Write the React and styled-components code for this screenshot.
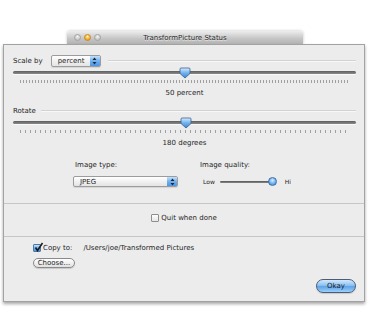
import React from 'react';
import styled, { createGlobalStyle } from 'styled-components';

const GlobalStyle = createGlobalStyle`
  body {
    margin: 0;
    background: #fff;
    font-family: "DejaVu Sans", "Liberation Sans", sans-serif;
    font-size: 7px;
    color: #1e1e1e;
  }
`;

const Stage = styled.div`
  width: 370px;
  height: 333px;
  padding-top: 31px;
  box-sizing: border-box;
`;

const TitleBar = styled.div`
  margin-left: 67px;
  width: 236px;
  height: 13px;
  box-sizing: border-box;
  display: grid;
  grid-template-columns: 1fr auto 1fr;
  align-items: center;
  background: linear-gradient(#ededed, #c4c4c4 60%, #b4b4b4);
  border-radius: 3px 3px 0 0;
  box-shadow: 0 0 3px rgba(0,0,0,.25);
`;

const Lights = styled.div`
  display: flex;
  gap: 3px;
  padding-left: 7px;
`;

const Light = styled.span`
  width: 7px;
  height: 7px;
  border-radius: 50%;
  box-sizing: border-box;
  border: 1px solid ${p => (p.active ? '#c98a1c' : '#a4a4a4')};
  background: ${p => (p.active
    ? 'radial-gradient(circle at 50% 30%, #fff2b0, #f5b635 55%, #e0901a)'
    : 'radial-gradient(circle at 50% 30%, #f4f4f4, #cdcdcd 60%, #b8b8b8)')};
`;

const Title = styled.div`
  font-size: 7px;
  color: #2a2a2a;
  text-shadow: 0 1px 0 rgba(255,255,255,.6);
`;

const Panel = styled.div`
  margin-left: 3px;
  width: 362px;
  height: 258px;
  box-sizing: border-box;
  border: 1px solid #a2a2a2;
  background: #ececec;
  box-shadow: 0 2px 3px rgba(0,0,0,.35);
  display: flex;
  flex-direction: column;
`;

const Section = styled.div`
  height: ${p => p.h}px;
  box-sizing: border-box;
  padding: ${p => p.pad};
  border-bottom: ${p => (p.last ? 'none' : '1px solid #c6c6c6')};
  display: flex;
  flex-direction: column;
`;

const GroupHeader = styled.div`
  height: 13px;
  margin-top: ${p => p.mt}px;
  display: flex;
  align-items: center;
`;

const GroupLine = styled.div`
  flex: 1;
  height: 1px;
  margin-left: ${p => p.ml}px;
  background: #d2d2d2;
  border-bottom: 1px solid #f8f8f8;
`;

const Popup = styled.div`
  width: ${p => p.w}px;
  height: ${p => p.h}px;
  margin-left: ${p => p.ml || 0}px;
  box-sizing: border-box;
  border: 1px solid #9c9c9c;
  border-radius: 2px;
  background: linear-gradient(#ffffff, #f1f1f1 50%, #e4e4e4);
  display: flex;
  align-items: center;
  padding-left: 6px;
  box-shadow: 0 1px 1px rgba(0,0,0,.1);
`;

const PopupText = styled.span`
  flex: 1;
`;

const PopupArrows = styled.div`
  width: 10px;
  align-self: stretch;
  display: flex;
  align-items: center;
  justify-content: center;
  background: linear-gradient(#c6e0fa, #6fb0ef 50%, #4f97e2);
  border-radius: 0 1px 1px 0;
`;

const SliderRow = styled.div`
  position: relative;
  height: 11px;
  display: flex;
  align-items: center;
`;

const Track = styled.div`
  flex: 1;
  height: 3px;
  border-radius: 2px;
  background: linear-gradient(#5e5e5e, #8a8a8a);
  box-shadow: 0 1px 0 rgba(255,255,255,.7);
`;

const Knob = styled.svg`
  position: absolute;
  top: 0;
  transform: translateX(-50%);
`;

const Ticks = styled.div`
  height: 3px;
  margin: 2px ${p => p.inset}px 0;
  background: repeating-linear-gradient(to right, #8d8d8d 0 1px, transparent 1px ${p => p.step}px);
  opacity: .8;
`;

const ValueLabel = styled.div`
  margin-top: 5px;
  height: 10px;
  line-height: 10px;
  text-align: center;
`;

const ImageRow = styled.div`
  margin-top: 12px;
  margin-left: 60px;
  display: flex;
  gap: 22px;
`;

const Column = styled.div`
  display: flex;
  flex-direction: column;
  gap: 6px;
`;

const Label = styled.div`
  height: 10px;
  line-height: 10px;
  padding-left: ${p => p.pl || 0}px;
`;

const QualityRow = styled.div`
  height: 11px;
  display: flex;
  align-items: center;
  padding-left: 3px;
  font-size: 6px;
`;

const MiniSlider = styled.div`
  position: relative;
  width: 60px;
  margin: 0 5px;
  height: 11px;
  display: flex;
  align-items: center;
`;

const MiniTrack = styled.div`
  width: 52px;
  height: 2px;
  border-radius: 1px;
  background: linear-gradient(#555, #8a8a8a);
`;

const RoundKnob = styled.div`
  position: absolute;
  left: 48px;
  top: 1px;
  width: 9px;
  height: 9px;
  border-radius: 50%;
  box-sizing: border-box;
  border: 1px solid #3d6fa8;
  background: radial-gradient(circle at 50% 35%, #d8ecff, #6fb0ef 55%, #3f86d4);
`;

const CheckRow = styled.div`
  height: 10px;
  display: flex;
  align-items: center;
  justify-content: ${p => (p.center ? 'center' : 'flex-start')};
  gap: 2px;
`;

const Box = styled.div`
  width: 8px;
  height: 8px;
  box-sizing: border-box;
  border: 1px solid ${p => (p.checked ? '#4a78a8' : '#8e8e8e')};
  border-radius: 1px;
  background: ${p => (p.checked
    ? 'linear-gradient(#c7e1fb, #6aaeee 55%, #4d95e0)'
    : 'linear-gradient(#fdfdfd, #e6e6e6)')};
  position: relative;
`;

const CheckMark = styled.svg`
  position: absolute;
  left: 0;
  top: -3px;
`;

const Path = styled.span`
  margin-left: 9px;
`;

const PillButton = styled.button`
  height: ${p => p.h}px;
  width: ${p => p.w}px;
  padding: 0;
  margin-top: ${p => p.mt}px;
  align-self: ${p => p.align};
  font-family: inherit;
  font-size: 7px;
  color: #1e1e1e;
  border-radius: 8px;
  border: 1px solid ${p => (p.primary ? '#4b5d75' : '#8a8a8a')};
  background: ${p => (p.primary
    ? 'linear-gradient(#d3e8fc, #8cc2f3 45%, #5fa3ea 55%, #9bd0fb)'
    : 'linear-gradient(#ffffff, #f0f0f0 50%, #e0e0e0)')};
  box-shadow: 0 1px 1px rgba(0,0,0,.15);
`;

const Arrows = () => (
  <svg width="5" height="8" viewBox="0 0 5 8">
    <path d="M2.5 0.5 L4.5 3 H0.5 Z M2.5 7.5 L4.5 5 H0.5 Z" fill="#1a2a40" />
  </svg>
);

const SliderKnob = ({ at }) => (
  <Knob width="12" height="12" viewBox="0 0 12 12" style={{ left: at }}>
    <defs>
      <linearGradient id="kg" x1="0" y1="0" x2="0" y2="1">
        <stop offset="0" stopColor="#d9ecff" />
        <stop offset=".5" stopColor="#70b1ef" />
        <stop offset="1" stopColor="#3d84d2" />
      </linearGradient>
    </defs>
    <path d="M2 1 H10 Q11 1 11 2 V6.5 L6 11 L1 6.5 V2 Q1 1 2 1 Z" fill="url(#kg)" stroke="#3b5f8a" strokeWidth="0.8" />
  </Knob>
);

const Slider = ({ at }) => (
  <SliderRow>
    <Track />
    <SliderKnob at={at} />
  </SliderRow>
);

export default function App() {
  return (
    <Stage>
      <GlobalStyle />
      <TitleBar>
        <Lights>
          <Light />
          <Light active />
          <Light />
        </Lights>
        <Title>TransformPicture Status</Title>
        <div />
      </TitleBar>
      <Panel>
        <Section h={159} pad="0 8px 0 9px">
          <GroupHeader mt={9}>
            <span>Scale by</span>
            <Popup w={50} h={12} ml={8}>
              <PopupText>percent</PopupText>
              <PopupArrows><Arrows /></PopupArrows>
            </Popup>
            <GroupLine ml={7} />
          </GroupHeader>
          <Slider at="50%" />
          <Ticks inset={7} step={3} />
          <ValueLabel>50 percent</ValueLabel>

          <GroupHeader mt={6}>
            <span>Rotate</span>
            <GroupLine ml={5} />
          </GroupHeader>
          <Slider at="50.3%" />
          <Ticks inset={7} step={5} />
          <ValueLabel>180 degrees</ValueLabel>

          <ImageRow>
            <Column>
              <Label pl={2}>Image type:</Label>
              <Popup w={105} h={11}>
                <PopupText>JPEG</PopupText>
                <PopupArrows><Arrows /></PopupArrows>
              </Popup>
            </Column>
            <Column>
              <Label>Image quality:</Label>
              <QualityRow>
                <span>Low</span>
                <MiniSlider>
                  <MiniTrack />
                  <RoundKnob />
                </MiniSlider>
                <span>Hi</span>
              </QualityRow>
            </Column>
          </ImageRow>
        </Section>

        <Section h={33} pad="9px 0 0 0">
          <CheckRow center>
            <Box />
            <span>Quit when done</span>
          </CheckRow>
        </Section>

        <Section last h={64} pad="6px 8px 0 29px">
          <CheckRow>
            <Box checked>
              <CheckMark width="10" height="10" viewBox="0 0 10 10">
                <path d="M1.5 5.5 L3.5 8.5 L8.5 1" fill="none" stroke="#1b1b1b" strokeWidth="1.6" />
              </CheckMark>
            </Box>
            <span>Copy to:</span>
            <Path>/Users/joe/Transformed Pictures</Path>
          </CheckRow>
          <PillButton w={42} h={10} mt={5} align="flex-start">Choose...</PillButton>
          <PillButton primary w={40} h={14} mt={11} align="flex-end">Okay</PillButton>
        </Section>
      </Panel>
    </Stage>
  );
}
